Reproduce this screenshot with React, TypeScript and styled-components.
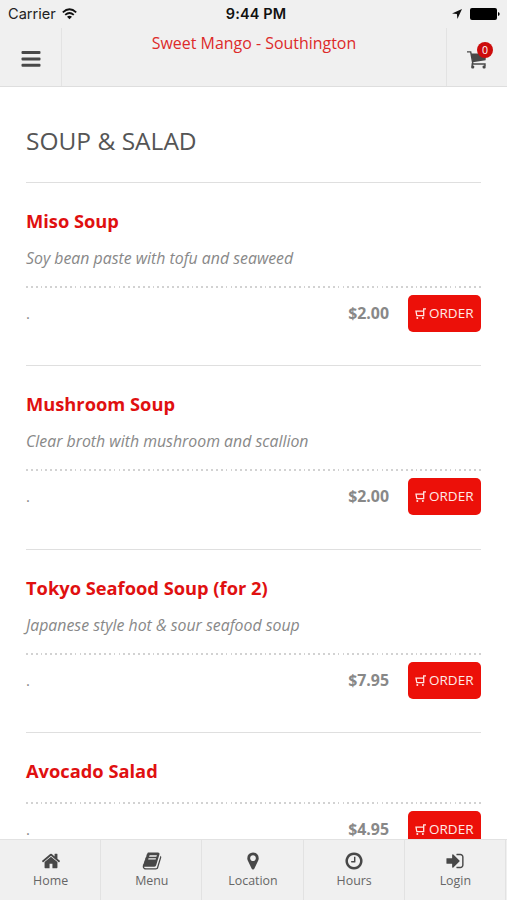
import React from "react";
import styled, { createGlobalStyle } from "styled-components";

const GlobalStyle = createGlobalStyle`
  * { box-sizing: border-box; }
  body { margin: 0; background: #fff; font-family: "Open Sans", "Noto Sans", sans-serif; }
`;

const Screen = styled.div`
  width: 507px;
  height: 900px;
  display: flex;
  flex-direction: column;
  overflow: hidden;
  background: #fff;
`;

const StatusBar = styled.div`
  flex: none;
  height: 28px;
  padding: 0 7px 0 8px;
  display: grid;
  grid-template-columns: 1fr auto 1fr;
  align-items: center;
  background: #f0f0f0;
  color: #222;
  font: 14.6px/28px Inter, sans-serif;
`;

const StatusGroup = styled.div<{ $end?: boolean }>`
  display: flex;
  align-items: center;
  gap: ${(p) => (p.$end ? 8 : 6)}px;
  justify-content: ${(p) => (p.$end ? "flex-end" : "flex-start")};
`;

const Clock = styled.div`
  font-weight: 600;
  font-size: 14.5px;
  letter-spacing: 0.1px;
  padding-left: 4px;
  color: #111;
`;

const Header = styled.header`
  flex: none;
  height: 59px;
  display: grid;
  grid-template-columns: 62px 1fr 61px;
  background: #f0f0f0;
  border-bottom: 1px solid #dedede;
`;

const HeaderButton = styled.div<{ $side: "left" | "right" }>`
  display: flex;
  align-items: center;
  justify-content: center;
  padding-top: 4px;
  border-${(p) => (p.$side === "left" ? "right" : "left")}: 1px solid #e3e3e3;
`;

const Brand = styled.div`
  text-align: center;
  padding-top: 4px;
  font-size: 15.95px;
  line-height: 22px;
  color: #dd2a2a;
`;

const CartWrap = styled.div`
  position: relative;
  display: flex;
  padding-top: 1px;
`;

const Badge = styled.span`
  position: absolute;
  left: 10px;
  top: -8px;
  width: 16px;
  height: 16px;
  border-radius: 50%;
  background: #cc0c0c;
  color: #fff;
  font-size: 10.5px;
  line-height: 16px;
  text-align: center;
`;

const Content = styled.main`
  flex: 1;
  min-height: 0;
  overflow: hidden;
  padding: 0 26px;
`;

const Heading = styled.h1`
  margin: 0;
  height: 95px;
  padding-top: 37px;
  font-weight: 400;
  font-size: 24.5px;
  line-height: 34px;
  color: #555;
`;

const Item = styled.section`
  height: 183.3px;
  border-top: 1px solid #dfdfdf;
  padding-top: 25px;
`;

const Name = styled.h2`
  margin: 0;
  font-size: 18.3px;
  font-weight: 700;
  line-height: 26px;
  color: #e01010;
`;

const Description = styled.p`
  margin: 12px 0 -2px;
  font-size: 15.85px;
  font-style: italic;
  line-height: 24px;
  color: #888;
`;

const Row = styled.div`
  margin-top: 18px;
  padding-top: 9px;
  background: repeating-linear-gradient(90deg, #d2d2d2 0 1.8px, transparent 1.8px 4.87px) 0 0 / 100% 2px no-repeat;
  display: flex;
  align-items: flex-start;
  font-size: 15px;
  color: #888;
  line-height: 37px;
`;

const Price = styled.span`
  margin-left: auto;
  margin-right: 19px;
  font-weight: 700;
  font-size: 15.9px;
`;

const OrderButton = styled.div`
  width: 73px;
  height: 37px;
  border-radius: 5px;
  background: #ec1009;
  color: #ffe9e6;
  display: flex;
  align-items: center;
  padding-left: 7px;
  gap: 3px;
  font-size: 13.5px;
`;

const TabBar = styled.nav`
  flex: none;
  height: 61px;
  display: grid;
  grid-template-columns: repeat(5, 101.2px) 1fr;
  background: #f0f0f0;
  border-top: 1px solid #e2e2e2;
`;

const Tab = styled.div`
  border-right: 1px solid #e2e2e2;
  display: flex;
  flex-direction: column;
  align-items: center;
  padding: 11px 0 0 1px;
  font-size: 12.4px;
  line-height: 18px;
  color: #666;
  gap: 1px;
`;

const Glyph = ({ d, size = 20 }: { d: string; size?: number }) => (
  <svg width={size} height={size} viewBox="0 0 1792 1792" fill="#484848">
    <path d={d} />
  </svg>
);

const items = [
  { name: "Miso Soup", desc: "Soy bean paste with tofu and seaweed", price: "$2.00" },
  { name: "Mushroom Soup", desc: "Clear broth with mushroom and scallion", price: "$2.00" },
  { name: "Tokyo Seafood Soup (for 2)", desc: "Japanese style hot & sour seafood soup", price: "$7.95" },
  { name: "Avocado Salad", desc: "", price: "$4.95" },
];

const tabs = [
  { label: "Home", d: "M1472 992v480q0 26-19 45t-45 19h-384v-384h-256v384h-384q-26 0-45-19t-19-45v-480q0-1 .5-3t.5-3l575-474 575 474q1 2 1 6zm223-69l-62 74q-8 9-21 11h-3q-13 0-21-7l-692-577-692 577q-12 8-24 7-13-2-21-11l-62-74q-8-10-7-23.5t11-21.5l719-599q32-26 76-26t76 26l244 204v-195q0-14 9-23t23-9h192q14 0 23 9t9 23v408l219 182q10 8 11 21.5t-7 23.5z" },
  { label: "Menu", d: "M1703 478q40 57 18 129l-275 906q-19 64-76.5 107.5t-122.5 43.5h-923q-77 0-148.5-53.5t-99.5-131.5q-24-67-2-127 0-4 3-27t4-37q1-8-3-21.5t-3-19.5q2-11 8-21t16.5-23.5 16.5-23.5q23-38 45-91.5t30-91.5q3-10 .5-30t-.5-28q3-11 17-28t17-23q21-36 42-92t25-90q1-9-2.5-32t.5-28q4-13 22-30.5t22-22.5q19-26 42.5-84.5t27.5-96.5q1-8-3-25.5t-2-26.5q2-8 9-18t18-23 17-21q8-12 16.5-30.5t15-35 16-36 19.5-32 26.5-23.5 36-11.5 47.5 5.5l-1 3q38-9 51-9h761q74 0 114 56t18 130l-274 906q-36 119-71.5 153.5t-128.5 34.5h-869q-27 0-38 15-11 16-1 43 24 70 144 70h923q29 0 56-15.5t35-41.5l300-987q7-22 5-57 38 15 59 43zm-1064 2q-4 13 2 22.5t20 9.5h608q13 0 25.5-9.5t16.5-22.5l21-64q4-13-2-22.5t-20-9.5h-608q-13 0-25.5 9.5t-16.5 22.5zm-83 256q-4 13 2 22.5t20 9.5h608q13 0 25.5-9.5t16.5-22.5l21-64q4-13-2-22.5t-20-9.5h-608q-13 0-25.5 9.5t-16.5 22.5z" },
  { label: "Location", d: "M1152 640q0-106-75-181t-181-75-181 75-75 181 75 181 181 75 181-75 75-181zm256 0q0 109-33 179l-364 774q-16 33-47.5 52t-67.5 19-67.5-19-46.5-52l-365-774q-33-70-33-179 0-212 150-362t362-150 362 150 150 362z" },
  { label: "Hours", d: "M1024 544v448q0 14-9 23t-23 9h-320q-14 0-23-9t-9-23v-64q0-14 9-23t23-9h224v-352q0-14 9-23t23-9h64q14 0 23 9t9 23zm416 352q0-148-73-273t-198-198-273-73-273 73-198 198-73 273 73 273 198 198 273 73 273-73 198-198 73-273zm224 0q0 209-103 385.5t-279.5 279.5-385.5 103-385.5-103-279.5-279.5-103-385.5 103-385.5 279.5-279.5 385.5-103 385.5 103 279.5 279.5 103 385.5z" },
  { label: "Login", d: "M1312 896q0 26-19 45l-544 544q-19 19-45 19t-45-19-19-45v-288h-448q-26 0-45-19t-19-45v-384q0-26 19-45t45-19h448v-288q0-26 19-45t45-19 45 19l544 544q19 19 19 45zm352-352v704q0 119-84.5 203.5t-203.5 84.5h-320q-13 0-22.5-9.5t-9.5-22.5q0-4-1-20t-.5-26.5 3-23.5 10-19.5 20.5-6.5h320q66 0 113-47t47-113v-704q0-66-47-113t-113-47h-312l-11.5-1-11.5-3-8-5.5-7-9-2-13.5q0-4-1-20t-.5-26.5 3-23.5 10-19.5 20.5-6.5h320q119 0 203.5 84.5t84.5 203.5z" },
];

export default function App() {
  return (
    <Screen>
      <GlobalStyle />
      <StatusBar>
        <StatusGroup>
          <span>Carrier</span>
          <svg width="15" height="12" viewBox="0 0 15 12" fill="none" stroke="#111" strokeWidth="1.8">
            <path d="M.8 4.3Q7.5-1.7 14.2 4.3M3.2 6.9Q7.5 3.1 11.8 6.9" />
            <path d="M5 8.7Q7.5 6.6 10 8.7L7.5 11.3Z" fill="#111" stroke="none" />
          </svg>
        </StatusGroup>
        <Clock>9:44 PM</Clock>
        <StatusGroup $end>
          <svg width="10" height="10" viewBox="0 0 10 10" fill="#111">
            <path d="M10 0L5.4 10L4.9 5.1L0 4.6Z" />
          </svg>
          <svg width="30" height="12" viewBox="0 0 30 12" fill="#000">
            <rect width="27" height="12" rx="2" />
            <path d="M28 4Q29.7 4.5 29.7 6T28 8Z" />
          </svg>
        </StatusGroup>
      </StatusBar>
      <Header>
        <HeaderButton $side="left">
          <svg width="20" height="16" viewBox="0 0 20 16" fill="#484848">
            <rect x=".5" y="0" width="19" height="3" rx="1" />
            <rect x=".5" y="6.4" width="19" height="3" rx="1" />
            <rect x=".5" y="12.8" width="19" height="3" rx="1" />
          </svg>
        </HeaderButton>
        <Brand>Sweet Mango - Southington</Brand>
        <HeaderButton $side="right">
          <CartWrap>
            <svg width="20" height="18" viewBox="0 0 20 18" fill="none" stroke="#484848" strokeWidth="1.4">
              <path d="M0 .9H3.7L6 13.6M5.2 15V13H18V15" />
              <path d="M4 2.5H19L18.6 9.3L5.8 11.2Z" fill="#484848" stroke="none" />
              <rect x="4.2" y="14.6" width="3" height="3" rx="1" fill="#484848" stroke="none" />
              <rect x="15.6" y="14.6" width="3" height="3" rx="1" fill="#484848" stroke="none" />
            </svg>
            <Badge>0</Badge>
          </CartWrap>
        </HeaderButton>
      </Header>
      <Content>
        <Heading>SOUP &amp; SALAD</Heading>
        {items.map((item) => (
          <Item key={item.name}>
            <Name>{item.name}</Name>
            {item.desc && <Description>{item.desc}</Description>}
            <Row>
              <span>.</span>
              <Price>{item.price}</Price>
              <OrderButton>
                <svg width="11" height="11" viewBox="0 0 11 11" fill="none" stroke="#ffe9e6" strokeWidth="1.3">
                  <path d="M11 .9H8.7V7.7H1.2M8.2 3.2H1L1.7 7" />
                  <circle cx="2.3" cy="10" r="1" fill="#ffe9e6" stroke="none" />
                  <circle cx="7.9" cy="10" r="1" fill="#ffe9e6" stroke="none" />
                </svg>
                ORDER
              </OrderButton>
            </Row>
          </Item>
        ))}
      </Content>
      <TabBar>
        {tabs.map((tab) => (
          <Tab key={tab.label}>
            <Glyph d={tab.d} />
            {tab.label}
          </Tab>
        ))}
      </TabBar>
    </Screen>
  );
}
